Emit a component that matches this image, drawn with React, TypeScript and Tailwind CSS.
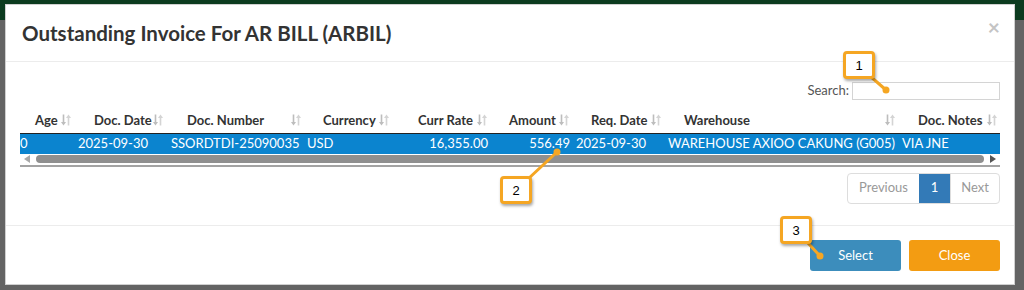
import React from "react";

type Col = { label: string; w: number; pl: number; cell: string; align?: "right" };

const COLS: Col[] = [
  { label: "Age", w: 54, pl: 15, cell: "0" },
  { label: "Doc. Date", w: 92, pl: 20, cell: "2025-09-30" },
  { label: "Doc. Number", w: 138, pl: 21, cell: "SSORDTDI-25090035" },
  { label: "Currency", w: 88, pl: 19, cell: "USD" },
  { label: "Curr Rate", w: 98, pl: 26, cell: "16,355.00", align: "right" },
  { label: "Amount", w: 82, pl: 19, cell: "556.49", align: "right" },
  { label: "Req. Date", w: 92, pl: 19, cell: "2025-09-30" },
  { label: "Warehouse", w: 234, pl: 20, cell: "WAREHOUSE AXIOO CAKUNG (G005)" },
  { label: "Doc. Notes", w: 102, pl: 20, cell: "VIA JNE" },
];

const CELL_PAD = [0, 4, 5, 3, 0, 0, 4, 4, 4];

function SortIcon() {
  return (
    <svg width="12" height="14" viewBox="0 0 12 14" className="shrink-0">
      <path d="M3.5 1.5v9" stroke="#bdbdbd" strokeWidth="1.6" />
      <path d="M1 9l2.5 3.5L6 9z" fill="#bdbdbd" />
      <path d="M8.5 12.5v-9" stroke="#d4d4d4" strokeWidth="1.6" />
      <path d="M6 5l2.5-3.5L11 5z" fill="#d4d4d4" />
    </svg>
  );
}

function Callout({ n, className }: { n: string; className: string }) {
  return (
    <div
      className={`absolute flex h-[28px] w-[32px] items-start justify-center rounded-[4px] border-[3px] border-[#f5a623] bg-white pt-[2px] font-['Liberation_Sans',sans-serif] text-[13px] text-black shadow-[1px_2px_3px_rgba(0,0,0,0.35)] ${className}`}
    >
      {n}
    </div>
  );
}

export default function App() {
  return (
    <div className="relative h-[290px] w-[1024px] overflow-hidden bg-[linear-gradient(#0c3b1f_0_20px,#646464_20px)] pb-[5px] pl-[5px] pr-[9px] pt-[4px] font-['Lato','Liberation_Sans',sans-serif]">
      <div className="flex h-[281px] flex-col border border-[#d0d0d0] bg-white">
        {/* header */}
        <div className="flex h-[57px] shrink-0 items-center justify-between border-b border-[#ececec] pl-[16px] pr-[14px]">
          <h4 className="text-[20.5px] font-bold text-[#333]">Outstanding Invoice For AR BILL (ARBIL)</h4>
          <span className="-mt-[14px] text-[21px] font-bold leading-none text-[#c4c4c4]">×</span>
        </div>

        {/* body */}
        <div className="flex h-[164px] shrink-0 flex-col border-b border-[#ececec] px-[14px] pt-[19px]">
          <div className="flex items-center justify-end gap-[3px] text-[13px] text-[#555]">
            <span>Search:</span>
            <div className="h-[18px] w-[148px] border border-[#d4d4d4]" />
          </div>

          <table className="mt-[9px] w-[980px] table-fixed border-collapse text-[13px]">
            <colgroup>
              {COLS.map((c) => (
                <col key={c.label} style={{ width: c.w }} />
              ))}
            </colgroup>
            <thead>
              <tr className="h-[24px] border-b border-[#222]">
                {COLS.map((c) => (
                  <th key={c.label} className="p-0 pb-[2px] font-bold text-[#333]">
                    <div className="flex items-center justify-between pr-[2px]" style={{ paddingLeft: c.pl }}>
                      <span className="whitespace-nowrap">{c.label}</span>
                      <SortIcon />
                    </div>
                  </th>
                ))}
              </tr>
            </thead>
            <tbody>
              <tr className="h-[20px] bg-[#0b84cf] text-white">
                {COLS.map((c, i) => (
                  <td
                    key={c.label}
                    className={`whitespace-nowrap p-0 ${c.align === "right" ? "pr-[2px] text-right" : ""}`}
                    style={c.align === "right" ? undefined : { paddingLeft: CELL_PAD[i] }}
                  >
                    {c.cell}
                  </td>
                ))}
              </tr>
            </tbody>
          </table>

          {/* horizontal scrollbar */}
          <div className="flex h-[13px] w-[980px] items-center gap-[6px] border-b-2 border-[#a3a3a3] px-[4px]">
            <svg width="6" height="8" viewBox="0 0 6 8">
              <path d="M6 0v8L0 4z" fill="#a8a8a8" />
            </svg>
            <div className="h-[8px] flex-1 rounded-full bg-[#8f8f8f]" />
            <svg width="6" height="8" viewBox="0 0 6 8">
              <path d="M0 0v8l6-4z" fill="#555" />
            </svg>
          </div>

          <div className="mt-[6px] flex w-[980px] justify-end text-[13px]">
            <div className="flex h-[31px] overflow-hidden rounded-[4px] border border-[#ddd]">
              <span className="flex w-[71px] items-center justify-center text-[#999]">Previous</span>
              <span className="flex w-[31px] items-center justify-center bg-[#337ab7] text-white">1</span>
              <span className="flex w-[49px] items-center justify-center border-l border-[#ddd] text-[#999]">Next</span>
            </div>
          </div>
        </div>

        {/* footer */}
        <div className="flex flex-1 items-start justify-end gap-[8px] pr-[14px] pt-[14px] text-[13px] text-white">
          <button className="h-[31px] w-[91px] rounded-[3px] bg-[#3c8dbc]">Select</button>
          <button className="h-[31px] w-[91px] rounded-[3px] bg-[#f39c12]">Close</button>
        </div>
      </div>

      {/* annotation overlays */}
      <svg className="pointer-events-none absolute inset-0" width="1024" height="290">
        <g stroke="#f5a623" strokeWidth="3" strokeLinecap="round" fill="none">
          <path d="M870 76 L886 90" />
          <path d="M528 179 L557 152" />
          <path d="M807 242 L820 256" />
        </g>
        <g fill="#f5a623">
          <circle cx="886" cy="90" r="3.5" />
          <circle cx="557" cy="152" r="3.5" />
          <circle cx="820" cy="256" r="3.5" />
        </g>
      </svg>
      <Callout n="1" className="left-[843px] top-[51px]" />
      <Callout n="2" className="left-[500px] top-[176px]" />
      <Callout n="3" className="left-[780px] top-[216px]" />
    </div>
  );
}
